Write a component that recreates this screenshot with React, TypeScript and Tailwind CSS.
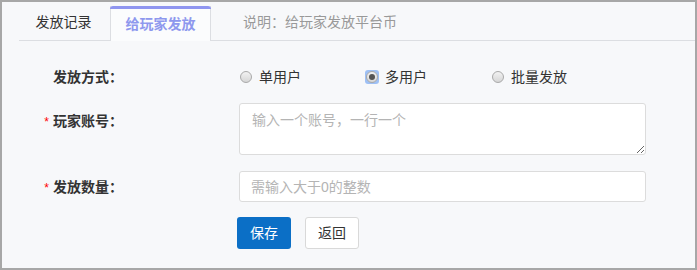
import { useState } from "react";

const FONT = { fontFamily: '"Liberation Sans", "Noto Sans CJK SC", sans-serif' };

export default function App() {
  const [mode, setMode] = useState("multi");
  const modes = [
    { key: "single", label: "单用户" },
    { key: "multi", label: "多用户" },
    { key: "batch", label: "批量发放" },
  ];

  return (
    <div style={FONT} className="w-[697px] h-[270px] border-2 border-[#a7a7a7] bg-[#f7f8fa] text-[14px] text-[#333] overflow-hidden">
      <div className="ml-[17px] mt-[3px] flex items-end h-[36px] border-b border-[#dcdee2]">
        <div className="w-[91px] h-[35px] pr-[2px] flex items-center justify-center text-[#333]">发放记录</div>
        <div className="relative w-[101px] h-[35px] -mb-px bg-[#fbfcfd] border-x border-[#dcdee2] flex items-center justify-center font-bold text-[#8e98ee]">
          <div className="absolute -left-px -right-px top-0 h-[3px] rounded-t-[3px] bg-[#8f95f0]" />
          <span className="pt-[2px]">给玩家发放</span>
        </div>
        <div className="ml-[32px] h-[35px] flex items-center text-[#999]">说明：给玩家发放平台币</div>
      </div>

      <div className="mt-[24px] flex flex-col">
        <Row label="发放方式：">
          <div className="h-[24px] flex items-center">
            {modes.map((m) => (
              <button key={m.key} type="button" onClick={() => setMode(m.key)} className="w-[126px] flex items-center gap-[6px] text-left">
                <Radio checked={mode === m.key} />
                <span>{m.label}</span>
              </button>
            ))}
          </div>
        </Row>

        <Row label="玩家账号：" required className="mt-[14px]" labelPad="pt-[5px]">
          <textarea
            placeholder="输入一个账号，一行一个"
            className="block w-[407px] h-[52px] px-[12px] py-[6px] leading-[20px] bg-white border border-[#dcdcdc] rounded-[3px] outline-none placeholder:text-[#b4b4b4]"
          />
        </Row>

        <Row label="发放数量：" required className="mt-[16px]" center>
          <input
            type="text"
            placeholder="需输入大于0的整数"
            className="block w-[407px] h-[31px] px-[11px] bg-white border border-[#dcdcdc] rounded-[3px] outline-none placeholder:text-[#b4b4b4]"
          />
        </Row>

        <div className="mt-[15px] ml-[235px] flex gap-[14px]">
          <button type="button" className="w-[54px] h-[32px] rounded-[3px] bg-[#0b6fc6] text-white">保存</button>
          <button type="button" className="w-[54px] h-[32px] rounded-[3px] bg-white border border-[#d9d9d9] text-[#333]">返回</button>
        </div>
      </div>
    </div>
  );
}

function Row({
  label,
  required,
  className = "",
  labelPad = "",
  center,
  children,
}: {
  label: string;
  required?: boolean;
  className?: string;
  labelPad?: string;
  center?: boolean;
  children: React.ReactNode;
}) {
  return (
    <div className={`flex ${center ? "items-center" : "items-start"} ${className}`}>
      <div className={`w-[121px] flex justify-end items-center font-bold leading-[24px] ${labelPad}`}>
        {required && <span className="text-[#f00] text-[12px] font-normal mr-[4px] mt-[2px]">*</span>}
        <span>{label}</span>
      </div>
      <div className="ml-[116px]">{children}</div>
    </div>
  );
}

function Radio({ checked }: { checked: boolean }) {
  return (
    <span className={`w-[14px] h-[14px] flex items-center justify-center rounded-[3px] ${checked ? "bg-[#9ec0f5]" : ""}`}>
      <span className="w-[12px] h-[12px] rounded-full border border-[#a9a9a9] bg-gradient-to-b from-[#f2f2f2] to-[#d6d6d6] flex items-center justify-center">
        {checked && <span className="w-[6px] h-[6px] rounded-full bg-[#555]" />}
      </span>
    </span>
  );
}
